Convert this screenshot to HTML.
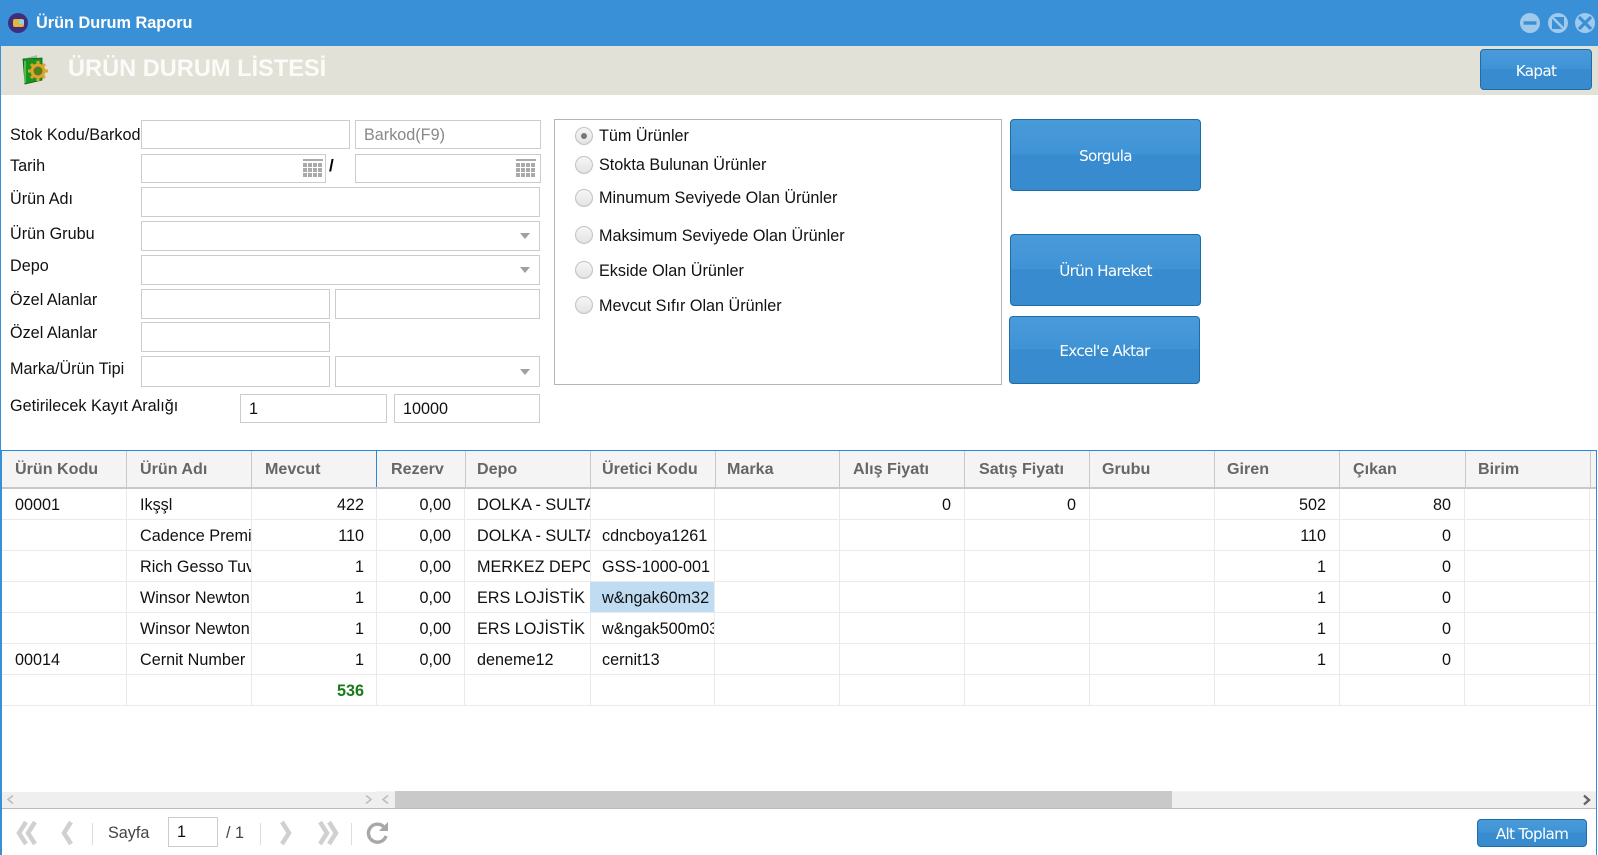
<!DOCTYPE html>
<html lang="tr"><head><meta charset="utf-8"><title>Ürün Durum Raporu</title>
<style>
html,body{margin:0;padding:0;width:1598px;height:855px;overflow:hidden;background:#fff;font-family:"Liberation Sans",Arial,sans-serif;font-size:16.2px;color:#111}
div,span{position:absolute;box-sizing:border-box;white-space:nowrap}
.in{border:1px solid #ccc;background:#fff}
.l{left:10px;height:20px;line-height:20px}
.btn{border:1px solid #1c6ea8;border-radius:4px;background:linear-gradient(#4a9ad9 0,#3f94d6 48%,#378bcf 50%,#388bcd 100%);color:#fff;text-align:center;font-family:"DejaVu Sans",sans-serif;font-size:15.2px;letter-spacing:-.7px}
.r{width:18px;height:18px;left:575px;border-radius:50%;border:1px solid #c4c4c4;background:linear-gradient(#f6f6f6,#e4e4e4);box-shadow:inset 0 -1px 1px #ddd}
.rt{left:599px;height:20px;line-height:20px}
.h{top:451px;height:36px;line-height:36px;font-weight:bold;color:#666;font-size:16.1px}
.v{width:1px;background:#c8c8c8;top:451px;height:36px}
.c{width:1px;background:#eaeaea;top:489px;height:217px}
.row{left:2px;width:1594px;height:1px;background:#eaeaea}
.t{height:20px;line-height:20px;overflow:hidden}
.num{text-align:right}
.cal{width:20px;height:18px;background:
 linear-gradient(#aaa,#aaa) 0 0/100% 2px no-repeat,
 repeating-linear-gradient(90deg,#aaa 0 4px,transparent 4px 5px) 0 4px/100% 14px no-repeat}
.cal:after{content:"";position:absolute;left:0;right:0;top:8px;height:1px;background:#fff;box-shadow:0 5px 0 #fff}
.dd{width:0;height:0;border:5.5px solid transparent;border-top:6px solid #a0a0a0;border-bottom:0}
.sep{width:1px;height:22px;top:823px;background:#ddd}
</style></head><body>

<!-- title -->
<div style="left:0;top:0;width:1598px;height:46px;background:#3a90d6"></div>
<div style="left:8px;top:13px;width:20px;height:20px;border-radius:50%;background:#3f2d80"></div>
<div style="left:13px;top:19px;width:11px;height:8px;border-radius:2px;background:#e0b93a"></div>
<div style="left:19px;top:20px;width:5px;height:4px;background:#8fd0ee"></div>
<div style="left:36px;top:13px;height:20px;line-height:20px;font-weight:bold;color:#fff;font-size:16.3px">Ürün Durum Raporu</div>
<svg style="position:absolute;left:1520px;top:13px" width="78" height="20" viewBox="0 0 78 20">
<circle cx="10" cy="10" r="10" fill="#a0c9ec"/><rect x="3.5" y="8.300" width="13" height="3.400" fill="#3a90d6"/>
<circle cx="38" cy="10" r="10" fill="#a0c9ec"/><rect x="32" y="4" width="12" height="12" fill="#3a90d6"/><path d="M32 4l12 12" stroke="#a0c9ec" stroke-width="2.500"/>
<circle cx="65" cy="10" r="10" fill="#a0c9ec"/><path d="M59 4l12 12M71 4L59 16" stroke="#3a90d6" stroke-width="3.200"/>
</svg>

<!-- band -->
<div style="left:0;top:46px;width:1px;height:809px;background:#3a90d6"></div>
<div style="left:1px;top:450px;width:1px;height:405px;background:#3a90d6"></div>
<div style="left:1596px;top:450px;width:1px;height:405px;background:#2a88d8"></div>
<div style="left:1px;top:46px;width:1597px;height:49px;background:#e1e1d7"></div>
<svg style="position:absolute;left:22px;top:53px" width="27" height="32" viewBox="0 0 27 32">
<path d="M1 6L15 2l0 3-12 3z" fill="#9ac0a0"/><path d="M1 6l2 25 17-4V5z" fill="#17951f" stroke="#0b5c12" stroke-width=".8"/><path d="M3 8v22" stroke="#5ecb55" stroke-width="1.600"/>
<circle cx="16" cy="18" r="7.500" fill="#d9a62d"/><path d="M16 8v20M6 18h20M9 11l14 14M23 11L9 25" stroke="#d9a62d" stroke-width="3"/><circle cx="16" cy="18" r="4" fill="#3f8a1c" stroke="#8a6410"/>
</svg>
<div style="left:68px;top:54px;height:30px;line-height:30px;font-weight:bold;color:#fbfbf8;font-size:23.6px">ÜRÜN DURUM LİSTESİ</div>
<div class="btn" style="left:1480px;top:49px;width:112px;height:41px;line-height:43px">Kapat</div>

<!-- form -->
<div class="l" style="top:125px">Stok Kodu/Barkod</div>
<div class="in" style="left:141px;top:120px;width:209px;height:29px"></div>
<div class="in" style="left:355px;top:120px;width:186px;height:29px;color:#888;padding-left:8px;line-height:29px">Barkod(F9)</div>
<div class="l" style="top:156px">Tarih</div>
<div class="in" style="left:141px;top:154px;width:185px;height:29px"></div>
<div class="cal" style="left:303px;top:159px"></div>
<div style="left:329px;top:156px;height:20px;line-height:20px;font-weight:bold;font-size:17px;color:#000">/</div>
<div class="in" style="left:355px;top:154px;width:186px;height:29px"></div>
<div class="cal" style="left:516px;top:159px"></div>
<div class="l" style="top:189px">Ürün Adı</div>
<div class="in" style="left:141px;top:187px;width:399px;height:30px"></div>
<div class="l" style="top:224px">Ürün Grubu</div>
<div class="in" style="left:141px;top:221px;width:399px;height:30px"></div>
<div class="dd" style="left:520px;top:233px"></div>
<div class="l" style="top:256px">Depo</div>
<div class="in" style="left:141px;top:255px;width:399px;height:30px"></div>
<div class="dd" style="left:520px;top:267px"></div>
<div class="l" style="top:290px">Özel Alanlar</div>
<div class="in" style="left:141px;top:289px;width:189px;height:30px"></div>
<div class="in" style="left:335px;top:289px;width:205px;height:30px"></div>
<div class="l" style="top:323px">Özel Alanlar</div>
<div class="in" style="left:141px;top:322px;width:189px;height:30px"></div>
<div class="l" style="top:359px">Marka/Ürün Tipi</div>
<div class="in" style="left:141px;top:356px;width:189px;height:31px"></div>
<div class="in" style="left:335px;top:356px;width:205px;height:31px"></div>
<div class="dd" style="left:520px;top:369px"></div>
<div class="l" style="top:396px">Getirilecek Kayıt Aralığı</div>
<div class="in" style="left:240px;top:394px;width:147px;height:29px;padding-left:8px;line-height:28px">1</div>
<div class="in" style="left:394px;top:394px;width:146px;height:29px;padding-left:8px;line-height:28px">10000</div>

<!-- radios -->
<div style="left:554px;top:119px;width:448px;height:266px;border:1px solid #b4b4b4"></div>
<div class="r" style="top:127px"></div><div style="left:581px;top:133px;width:6px;height:6px;border-radius:50%;background:#777"></div>
<div class="rt" style="top:126px">Tüm Ürünler</div>
<div class="r" style="top:156px"></div><div class="rt" style="top:155px">Stokta Bulunan Ürünler</div>
<div class="r" style="top:189px"></div><div class="rt" style="top:188px">Minumum Seviyede Olan Ürünler</div>
<div class="r" style="top:226px"></div><div class="rt" style="top:226px">Maksimum Seviyede Olan Ürünler</div>
<div class="r" style="top:261px"></div><div class="rt" style="top:261px">Ekside Olan Ürünler</div>
<div class="r" style="top:296px"></div><div class="rt" style="top:296px">Mevcut Sıfır Olan Ürünler</div>

<div class="btn" style="left:1010px;top:119px;width:191px;height:72px;line-height:72px">Sorgula</div>
<div class="btn" style="left:1010px;top:234px;width:191px;height:72px;line-height:72px">Ürün Hareket</div>
<div class="btn" style="left:1009px;top:316px;width:191px;height:68px;line-height:68px">Excel'e Aktar</div>

<!-- grid -->
<div style="left:0;top:450px;width:1597px;height:1px;background:#2a88d8"></div>
<div style="left:2px;top:451px;width:1594px;height:36px;background:#f4f4f4"></div>
<div style="left:2px;top:487px;width:1594px;height:2px;background:#c8c8c8"></div>
<div class="v" style="left:126px"></div><div class="v" style="left:251px"></div>
<div class="v" style="left:376px;background:#2a88d8"></div>
<div class="v" style="left:465px"></div><div class="v" style="left:590px"></div><div class="v" style="left:715px"></div><div class="v" style="left:839px"></div><div class="v" style="left:964px"></div><div class="v" style="left:1089px"></div><div class="v" style="left:1214px"></div><div class="v" style="left:1339px"></div><div class="v" style="left:1465px"></div><div class="v" style="left:1590px"></div>
<div class="h" style="left:15px">Ürün Kodu</div>
<div class="h" style="left:140px">Ürün Adı</div>
<div class="h" style="left:265px">Mevcut</div>
<div class="h" style="left:391px">Rezerv</div>
<div class="h" style="left:477px">Depo</div>
<div class="h" style="left:602px">Üretici Kodu</div>
<div class="h" style="left:727px">Marka</div>
<div class="h" style="left:853px">Alış Fiyatı</div>
<div class="h" style="left:979px">Satış Fiyatı</div>
<div class="h" style="left:1102px">Grubu</div>
<div class="h" style="left:1227px">Giren</div>
<div class="h" style="left:1353px">Çıkan</div>
<div class="h" style="left:1478px">Birim</div>

<div class="c" style="left:126px"></div><div class="c" style="left:251px"></div><div class="c" style="left:376px"></div><div class="c" style="left:464px"></div><div class="c" style="left:590px"></div><div class="c" style="left:714px"></div><div class="c" style="left:839px"></div><div class="c" style="left:964px"></div><div class="c" style="left:1089px"></div><div class="c" style="left:1214px"></div><div class="c" style="left:1339px"></div><div class="c" style="left:1464px"></div><div class="c" style="left:1589px"></div>
<div class="row" style="top:519px"></div><div class="row" style="top:550px"></div><div class="row" style="top:581px"></div><div class="row" style="top:612px"></div><div class="row" style="top:643px"></div><div class="row" style="top:674px"></div><div class="row" style="top:705px"></div>
<div style="left:590px;top:582px;width:124px;height:30px;background:#bfdcf2"></div>

<!-- row 1 -->
<div class="t" style="left:15px;top:495px">00001</div>
<div class="t" style="left:140px;top:495px;width:111px">Ikşşl</div>
<div class="t num" style="left:260px;top:495px;width:104px">422</div>
<div class="t num" style="left:380px;top:495px;width:71px">0,00</div>
<div class="t" style="left:477px;top:495px;width:113px">DOLKA - SULTANBEYLİ</div>
<div class="t num" style="left:850px;top:495px;width:101px">0</div>
<div class="t num" style="left:975px;top:495px;width:101px">0</div>
<div class="t num" style="left:1225px;top:495px;width:101px">502</div>
<div class="t num" style="left:1350px;top:495px;width:101px">80</div>
<!-- row 2 -->
<div class="t" style="left:140px;top:526px;width:111px">Cadence Premium</div>
<div class="t num" style="left:260px;top:526px;width:104px">110</div>
<div class="t num" style="left:380px;top:526px;width:71px">0,00</div>
<div class="t" style="left:477px;top:526px;width:113px">DOLKA - SULTANBEYLİ</div>
<div class="t" style="left:602px;top:526px;width:112px">cdncboya1261</div>
<div class="t num" style="left:1225px;top:526px;width:101px">110</div>
<div class="t num" style="left:1350px;top:526px;width:101px">0</div>
<!-- row 3 -->
<div class="t" style="left:140px;top:557px;width:111px">Rich Gesso Tuval</div>
<div class="t num" style="left:260px;top:557px;width:104px">1</div>
<div class="t num" style="left:380px;top:557px;width:71px">0,00</div>
<div class="t" style="left:477px;top:557px;width:113px">MERKEZ DEPO</div>
<div class="t" style="left:602px;top:557px;width:112px">GSS-1000-001</div>
<div class="t num" style="left:1225px;top:557px;width:101px">1</div>
<div class="t num" style="left:1350px;top:557px;width:101px">0</div>
<!-- row 4 -->
<div class="t" style="left:140px;top:588px;width:111px">Winsor Newton</div>
<div class="t num" style="left:260px;top:588px;width:104px">1</div>
<div class="t num" style="left:380px;top:588px;width:71px">0,00</div>
<div class="t" style="left:477px;top:588px;width:113px">ERS LOJİSTİK</div>
<div class="t" style="left:602px;top:588px;width:112px">w&amp;ngak60m32</div>
<div class="t num" style="left:1225px;top:588px;width:101px">1</div>
<div class="t num" style="left:1350px;top:588px;width:101px">0</div>
<!-- row 5 -->
<div class="t" style="left:140px;top:619px;width:111px">Winsor Newton</div>
<div class="t num" style="left:260px;top:619px;width:104px">1</div>
<div class="t num" style="left:380px;top:619px;width:71px">0,00</div>
<div class="t" style="left:477px;top:619px;width:113px">ERS LOJİSTİK</div>
<div class="t" style="left:602px;top:619px;width:112px">w&amp;ngak500m03</div>
<div class="t num" style="left:1225px;top:619px;width:101px">1</div>
<div class="t num" style="left:1350px;top:619px;width:101px">0</div>
<!-- row 6 -->
<div class="t" style="left:15px;top:650px">00014</div>
<div class="t" style="left:140px;top:650px;width:111px">Cernit Number</div>
<div class="t num" style="left:260px;top:650px;width:104px">1</div>
<div class="t num" style="left:380px;top:650px;width:71px">0,00</div>
<div class="t" style="left:477px;top:650px;width:113px">deneme12</div>
<div class="t" style="left:602px;top:650px;width:112px">cernit13</div>
<div class="t num" style="left:1225px;top:650px;width:101px">1</div>
<div class="t num" style="left:1350px;top:650px;width:101px">0</div>
<!-- total -->
<div class="t num" style="left:260px;top:681px;width:104px;font-weight:bold;color:#1a7a1a">536</div>

<!-- scrollbars -->
<div style="left:2px;top:792px;width:1594px;height:16px;background:#efefef"></div>
<div style="left:2px;top:808px;width:1594px;height:1px;background:#bbb"></div>
<div style="left:376px;top:791px;width:1220px;height:1px;background:#f4f4f4"></div>
<div style="left:395px;top:791px;width:777px;height:17px;background:#c9c9c9"></div>
<svg style="position:absolute;left:0;top:792px" width="1598" height="16" viewBox="0 0 1598 16">
<path d="M13 4L8 8l5 4M366 4l5 4-5 4M388 4l-5 4 5 4" transform="translate(0,-.5)" fill="none" stroke="#bdbdbd" stroke-width="1.600"/>
<path d="M1584 3.500l5 4.500-5 4.500" fill="none" stroke="#666" stroke-width="2.400"/>
</svg>

<!-- pager -->
<svg style="position:absolute;left:0;top:818px" width="400" height="30" viewBox="0 0 400 30">
<g fill="none" stroke="#d0d0d0" stroke-width="4.500">
<path d="M26 4L19 15l7 11M35 4L28 15l7 11"/>
<path d="M71 4L64 15l7 11"/>
<path d="M282 4l7 11-7 11"/>
<path d="M320 4l7 11-7 11M329 4l7 11-7 11"/>
</g>
<path d="M384 9a9 9 0 1 0 2 9" fill="none" stroke="#a8a8a8" stroke-width="3.400"/>
<path d="M388 4v9h-9z" fill="#a8a8a8"/>
</svg>
<div class="sep" style="left:92px"></div>
<div style="left:108px;top:823px;height:20px;line-height:20px;color:#444">Sayfa</div>
<div class="in" style="left:168px;top:817px;width:50px;height:30px;padding-left:8px;line-height:29px">1</div>
<div style="left:226px;top:823px;height:20px;line-height:20px;color:#444">/ 1</div>
<div class="sep" style="left:260px"></div>
<div class="sep" style="left:351px"></div>
<div class="btn" style="left:1477px;top:819px;width:110px;height:28px;line-height:28px">Alt Toplam</div>
</body></html>
